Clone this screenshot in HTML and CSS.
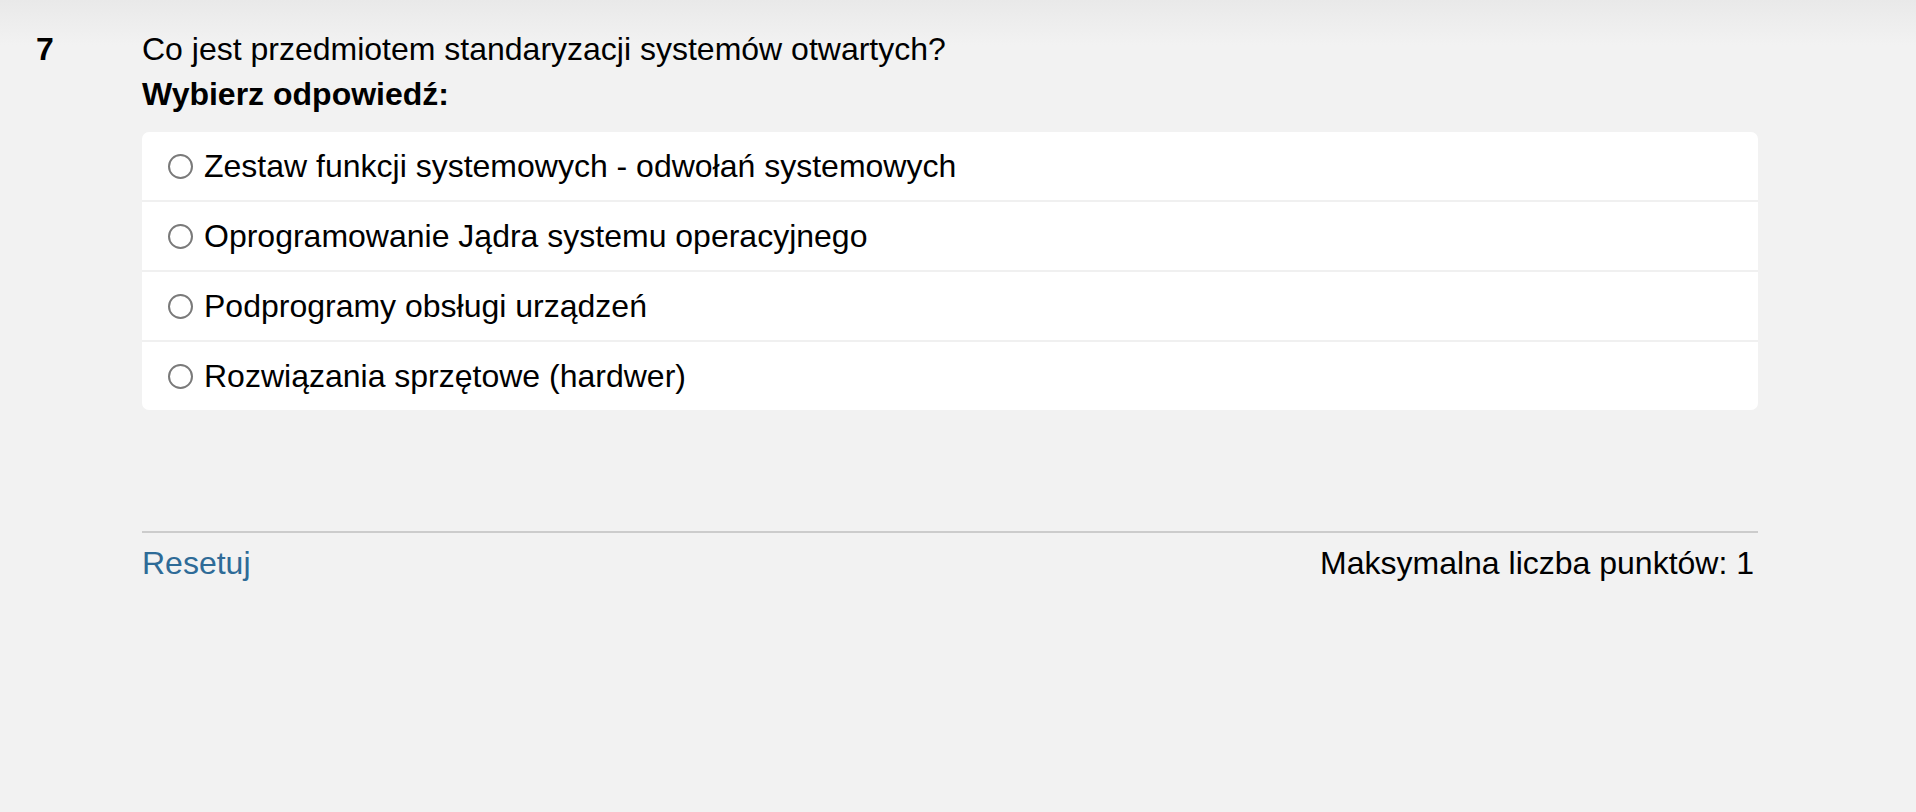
FILE: index.html
```html
<!DOCTYPE html>
<html lang="pl">
<head>
<meta charset="utf-8">
<title>Pytanie 7</title>
<link rel="stylesheet" href="styles.css">
</head>
<body>
<div class="page">
  <div class="question">
    <div class="qnum">7</div>
    <div class="qbody">
      <div class="qtext">Co jest przedmiotem standaryzacji systemów otwartych?</div>
      <div class="prompt">Wybierz odpowiedź:</div>
      <div class="answers">
        <label class="answer"><span class="radio"></span><span class="atext">Zestaw funkcji systemowych - odwołań systemowych</span></label>
        <label class="answer"><span class="radio"></span><span class="atext">Oprogramowanie Jądra systemu operacyjnego</span></label>
        <label class="answer"><span class="radio"></span><span class="atext">Podprogramy obsługi urządzeń</span></label>
        <label class="answer"><span class="radio"></span><span class="atext">Rozwiązania sprzętowe (hardwer)</span></label>
      </div>
      <div class="footer">
        <a class="reset" href="#">Resetuj</a>
        <span class="points">Maksymalna liczba punktów: 1</span>
      </div>
    </div>
  </div>
</div>
</body>
</html>
```
FILE: styles.css
```css
html, body {
  margin: 0;
  padding: 0;
}
body {
  background: linear-gradient(to bottom, #e9e9e9 0px, #f2f2f2 45px) no-repeat, #f2f2f2;
  min-height: 812px;
  font-family: "Liberation Sans", Arial, Helvetica, sans-serif;
  font-size: 32px;
  color: #000;
}
.page {
  padding: 29px 158px 0 36px;
}
.question {
  display: flex;
}
.qnum {
  width: 106px;
  flex: none;
  font-weight: bold;
  line-height: 40px;
}
.qbody {
  flex: 1;
}
.qtext {
  line-height: 40px;
}
.prompt {
  font-weight: bold;
  line-height: 40px;
  margin-top: 5px;
}
.answers {
  margin-top: 18px;
  background: #fff;
  border-radius: 7px;
  overflow: hidden;
}
.answer {
  display: flex;
  align-items: center;
  height: 68px;
  padding-left: 26px;
  box-sizing: border-box;
}
.answer + .answer {
  border-top: 2px solid #f0f0f0;
  height: 70px;
}
.radio {
  width: 21px;
  height: 21px;
  border: 2px solid #7a7a7a;
  border-radius: 50%;
  background: #fff;
  flex: none;
  margin-right: 11px;
}
.atext {
  line-height: 40px;
}
.footer {
  margin-top: 121px;
  border-top: 2px solid #cccccc;
  display: flex;
  justify-content: space-between;
  padding-top: 10px;
  line-height: 40px;
}
.reset {
  color: #2e6b97;
  text-decoration: none;
}
.points {
  padding-right: 4px;
}
```
